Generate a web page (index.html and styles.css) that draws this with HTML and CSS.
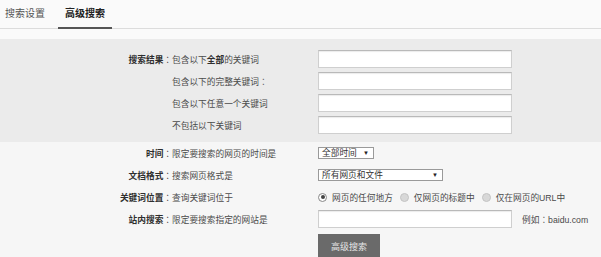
FILE: index.html
```html
<!DOCTYPE html>
<html lang="zh-CN">
<head>
<meta charset="utf-8">
<title>高级搜索</title>
<link rel="stylesheet" href="styles.css">
</head>
<body>
<div class="tabs">
  <span class="tab">搜索设置</span>
  <span class="tab active">高级搜索</span>
</div>
<div class="section keywords">
  <div class="row">
    <span class="label">搜索结果<span class="colon" lang="zh-TW">：</span></span>
    <span class="desc">包含以下<b>全部</b>的关键词</span>
    <span class="ctrl"><input type="text" class="field"></span>
  </div>
  <div class="row">
    <span class="label"></span>
    <span class="desc">包含以下的完整关键词<span class="colon" lang="zh-TW">：</span></span>
    <span class="ctrl"><input type="text" class="field"></span>
  </div>
  <div class="row">
    <span class="label"></span>
    <span class="desc">包含以下任意一个关键词</span>
    <span class="ctrl"><input type="text" class="field"></span>
  </div>
  <div class="row">
    <span class="label"></span>
    <span class="desc">不包括以下关键词</span>
    <span class="ctrl"><input type="text" class="field"></span>
  </div>
</div>
<div class="section options">
  <div class="row">
    <span class="label">时间<span class="colon" lang="zh-TW">：</span></span>
    <span class="desc">限定要搜索的网页的时间是</span>
    <span class="ctrl"><span class="select s-time">全部时间<span class="caret">▼</span></span></span>
  </div>
  <div class="row">
    <span class="label">文档格式<span class="colon" lang="zh-TW">：</span></span>
    <span class="desc">搜索网页格式是</span>
    <span class="ctrl"><span class="select s-type">所有网页和文件<span class="caret">▼</span></span></span>
  </div>
  <div class="row">
    <span class="label">关键词位置<span class="colon" lang="zh-TW">：</span></span>
    <span class="desc">查询关键词位于</span>
    <span class="ctrl radios">
      <span class="radio checked"><i></i>网页的任何地方</span>
      <span class="radio"><i></i>仅网页的标题中</span>
      <span class="radio"><i></i>仅在网页的URL中</span>
    </span>
  </div>
  <div class="row">
    <span class="label">站内搜索<span class="colon" lang="zh-TW">：</span></span>
    <span class="desc">限定要搜索指定的网站是</span>
    <span class="ctrl"><input type="text" class="field"><span class="example">例如<span class="colon" lang="zh-TW">：</span>baidu.com</span></span>
  </div>
  <div class="actions">
    <button class="btn">高级搜索</button>
  </div>
</div>
</body>
</html>
```

FILE: styles.css
```css
html, body {
  margin: 0;
  padding: 0;
  background: #fafafa;
  font-family: "Liberation Sans", "Noto Sans CJK SC", sans-serif;
  color: #333;
  overflow: hidden;
}

.tabs {
  display: flex;
  height: 28px;
  border-bottom: 1px solid #dcdcdc;
  padding-left: 5px;
  gap: 13px;
  align-items: stretch;
}

.tab {
  font-size: 10px;
  line-height: 28px;
  color: #555;
  box-sizing: border-box;
}

.tab.active {
  color: #222;
  font-weight: bold;
  padding: 0 7px;
  border-bottom: 2px solid #555;
  margin-bottom: -1px;
}

.section {
  font-size: 8.7px;
}

.colon {
  font-family: "Noto Sans CJK TC", sans-serif;
  font-weight: normal;
}

.keywords {
  margin-top: 10px;
  background: #ebebeb;
  padding: 9px 0 6px;
}

.options {
  background: #f6f6f6;
  padding: 0 0 10px;
}

.row {
  display: grid;
  grid-template-columns: 172px 146px 1fr;
  height: 22px;
  align-items: center;
}

.label {
  text-align: right;
  font-weight: bold;
  color: #2e2e2e;
}

.desc {
  color: #4a4a4a;
}

.desc b {
  color: #2e2e2e;
}

.ctrl {
  display: flex;
  align-items: center;
}

.field {
  box-sizing: border-box;
  width: 194px;
  height: 18px;
  margin: 0;
  padding: 0 3px;
  background: #fff;
  border: 1px solid #cfcfcf;
  border-top-color: #b9b9b9;
  box-shadow: inset 0 1px 1px rgba(0, 0, 0, 0.08);
  outline: none;
}

.select {
  box-sizing: border-box;
  display: flex;
  align-items: center;
  justify-content: space-between;
  height: 12px;
  padding: 0 4px 0 3px;
  background: #fff;
  border: 1px solid #9a9a9a;
  color: #333;
  font-size: 8.7px;
  line-height: 10px;
}

.s-time { width: 56px; }
.s-type { width: 125px; }

.caret {
  font-size: 6px;
  color: #222;
}

.radios {
  gap: 7px;
}

.radio {
  display: flex;
  align-items: center;
  color: #4a4a4a;
}

.radio i {
  box-sizing: border-box;
  width: 9px;
  height: 9px;
  border-radius: 50%;
  background: #d8d8d8;
  border: 1px solid #c4c4c4;
  margin: 0 5px 0 0;
  position: relative;
}

.radio.checked i {
  background: #fff;
  border-color: #888;
}

.radio.checked i::after {
  content: "";
  position: absolute;
  left: 1.5px;
  top: 1.5px;
  width: 4px;
  height: 4px;
  border-radius: 50%;
  background: #444;
}

.example {
  margin-left: 10px;
  color: #4a4a4a;
}

.actions {
  padding: 4px 0 0 318px;
}

.btn {
  width: 62px;
  height: 24px;
  border: 0;
  margin: 0;
  background: #6a6a6a;
  color: #e6e6e6;
  font-family: "Liberation Sans", "Noto Sans CJK SC", sans-serif;
  font-size: 9px;
  padding: 0;
}
```
